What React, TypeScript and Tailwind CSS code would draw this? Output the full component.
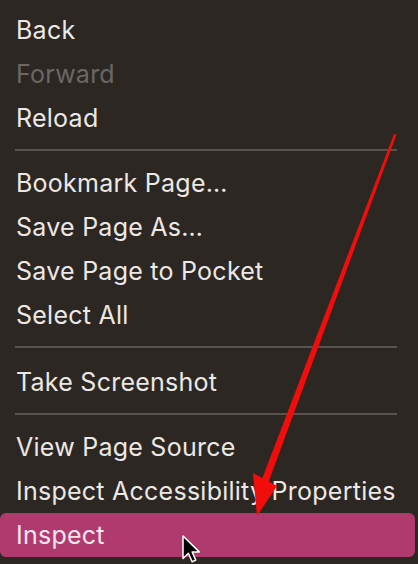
import React from "react";

type Item = { label: string; disabled?: boolean; active?: boolean } | { sep: string };

const items: Item[] = [
  { label: "Back" },
  { label: "Forward", disabled: true },
  { label: "Reload" },
  { sep: "mt-[9px] mb-[10px]" },
  { label: "Bookmark Page…" },
  { label: "Save Page As…" },
  { label: "Save Page to Pocket" },
  { label: "Select All" },
  { sep: "mt-[9px] mb-[12px]" },
  { label: "Take Screenshot" },
  { sep: "mt-[9px] mb-[10px]" },
  { label: "View Page Source" },
  { label: "Inspect Accessibility Properties" },
  { label: "Inspect", active: true },
];

export default function App() {
  return (
    <div
      className="relative w-[418px] h-[564px] overflow-hidden bg-[#2c2723]"
      style={{ fontFamily: "Inter, 'Noto Sans', sans-serif" }}
    >
      <div className="flex flex-col pt-[8px]">
        {items.map((it, i) =>
          "sep" in it ? (
            <div key={i} className={"pl-[15px] pr-[21px] " + it.sep}>
              <div className="h-[2px] w-full bg-[#58534f]" />
            </div>
          ) : (
            <div
              key={i}
              className={
                "h-[44px] flex items-center pl-[16px] pt-[2px] text-[25px] tracking-[0.25px] " +
                (it.active
                  ? "bg-[#b03a6e] rounded-[6px] mr-[3px] text-[#f5e6ee]"
                  : it.disabled
                  ? "text-[#6b6764]"
                  : "text-[#ebe8e5]")
              }
            >
              {it.label}
            </div>
          )
        )}
      </div>
      <svg
        className="absolute left-0 top-0 pointer-events-none"
        width="418"
        height="564"
        viewBox="0 0 418 564"
      >
        <polygon
          points="394,134 396.5,134.5 268.5,482 262,479"
          fill="#f20d0d"
        />
        <polygon points="253,473 277,486 257,516" fill="#f20d0d" />
        <g transform="translate(183,536) scale(1.25)">
          <path
            d="M0,0 L0,18 L4.3,13.8 L7.3,20.6 L10.2,19.3 L7.3,12.7 L13,12.7 Z"
            fill="#000"
            stroke="#fff"
            strokeWidth="1.2"
            strokeLinejoin="round"
          />
        </g>
      </svg>
    </div>
  );
}
